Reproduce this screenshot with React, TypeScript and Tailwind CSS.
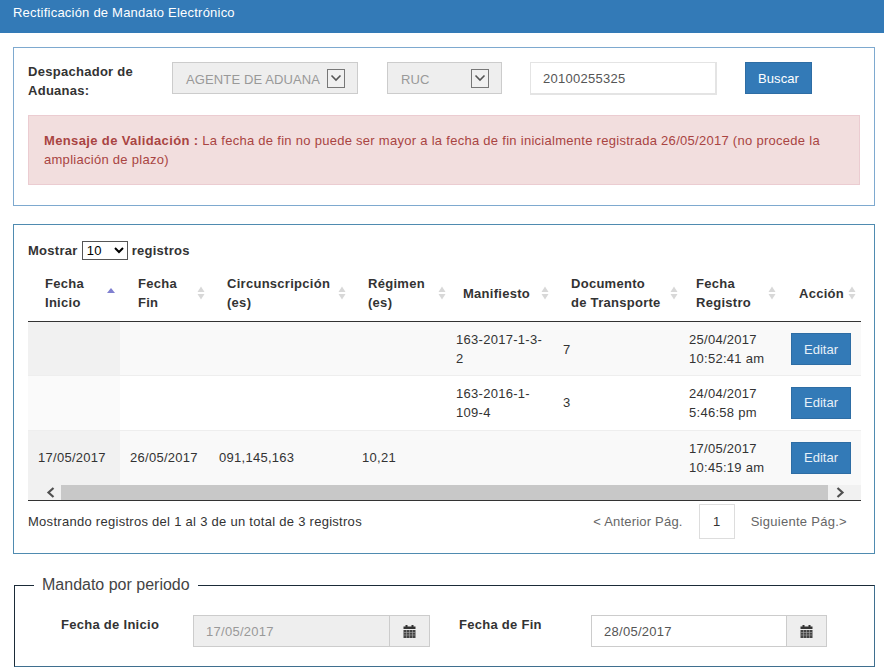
import React from "react";

function Sort({ active }: { active?: boolean }) {
  return (
    <svg width="8" height="14" viewBox="0 0 8 14" className="shrink-0">
      {active ? (
        <path d="M4 2 L8 7 H0 Z" fill="#8080d0" />
      ) : (
        <>
          <path d="M4 0.5 L7.5 6 H0.5 Z" fill="#d8d8d8" />
          <path d="M4 13.5 L7.5 8 H0.5 Z" fill="#d8d8d8" />
        </>
      )}
    </svg>
  );
}

function Calendar() {
  return (
    <svg width="13" height="13" viewBox="0 0 13 13">
      <rect x="2.5" y="0" width="2" height="2.5" fill="#333" />
      <rect x="8.5" y="0" width="2" height="2.5" fill="#333" />
      <rect x="0.5" y="1.5" width="12" height="2.5" fill="#333" />
      <rect x="0.5" y="5" width="12" height="8" fill="#444" />
      <path d="M0.5 7.5H12.5M0.5 10H12.5M3.5 5V13M6.5 5V13M9.5 5V13" stroke="#aaa" strokeWidth="0.6" />
    </svg>
  );
}

function FakeSelect({ text, w }: { text: string; w: string }) {
  return (
    <div className={`${w} h-8 bg-[#eeeeee] border border-[#cccccc] flex items-center justify-between pl-[13px] pr-3 shrink-0`}>
      <span className="text-[#999999] text-[13px] tracking-[0.12px] pt-[2px]">{text}</span>
      <span className="w-[18px] h-[19px] border border-[#777777] bg-[#f0f0f0] flex items-center justify-center">
        <svg width="12" height="8" viewBox="0 0 12 8">
          <path d="M1.5 1.5 L6 6 L10.5 1.5" fill="none" stroke="#555" strokeWidth="1.6" />
        </svg>
      </span>
    </div>
  );
}

type Head = { lines: string[]; pl: string; active?: boolean };

const heads: Head[] = [
  { lines: ["Fecha", "Inicio"], pl: "pl-[17px] pr-[5px]", active: true },
  { lines: ["Fecha", "Fin"], pl: "pl-[18px] pr-[4px]" },
  { lines: ["Circunscripción", "(es)"], pl: "pl-[18px] pr-[5px]" },
  { lines: ["Régimen", "(es)"], pl: "pl-[17px] pr-[1px]" },
  { lines: ["Manifiesto"], pl: "pl-[16px] pr-[4px]" },
  { lines: ["Documento", "de Transporte"], pl: "pl-[18px] pr-[1px]" },
  { lines: ["Fecha", "Registro"], pl: "pl-[17px] pr-[5px]" },
  { lines: ["Acción"], pl: "pl-[18px] pr-[5px]" },
];

const rows = [
  { stripe: true, a: "", b: "", c: "", d: "", m: ["163-2017-1-3-", "2"], doc: "7", r: ["25/04/2017", "10:52:41 am"] },
  { stripe: false, a: "", b: "", c: "", d: "", m: ["163-2016-1-", "109-4"], doc: "3", r: ["24/04/2017", "5:46:58 pm"] },
  { stripe: true, a: "17/05/2017", b: "26/05/2017", c: "091,145,163", d: "10,21", m: [], doc: "", r: ["17/05/2017", "10:45:19 am"] },
];

function Lines({ l }: { l: string[] }) {
  return (
    <>
      {l.map((t) => (
        <div key={t}>{t}</div>
      ))}
    </>
  );
}

function DateField({ value, disabled, w }: { value: string; disabled?: boolean; w: string }) {
  return (
    <div className="flex h-8">
      <div className={`${w} h-8 border border-[#cccccc] px-3 flex items-center text-[13px] ${disabled ? "bg-[#eeeeee] text-[#999999]" : "bg-white text-[#555555]"}`}>
        {value}
      </div>
      <div className="w-10 h-8 border border-l-0 border-[#cccccc] bg-[#eeeeee] flex items-center justify-center">
        <Calendar />
      </div>
    </div>
  );
}

export default function App() {
  return (
    <div className="w-[884px] h-[670px] overflow-hidden bg-white text-[#333333] text-[13px] leading-[19px] tracking-[0.28px]" style={{ fontFamily: '"Liberation Sans", Arial, sans-serif' }}>
      <div className="h-[33px] bg-[#337ab7] text-white pl-[13px] pt-[3px] tracking-[0.22px]">Rectificación de Mandato Electrónico</div>

      <div className="mt-[14px] mx-[13px] w-[862px] border border-[#7ea9cf] pt-[14px] px-[14px] pb-5">
        <div className="flex items-start h-[33px]">
          <div className="w-[144px] font-bold shrink-0">
            Despachador de
            <br />
            Aduanas:
          </div>
          <FakeSelect text="AGENTE DE ADUANA" w="w-[186px]" />
          <div className="ml-[29px]">
            <FakeSelect text="RUC" w="w-[115px]" />
          </div>
          <div className="ml-7 w-[187px] h-[33px] border-2 border-[#e4e4e4] border-t border-l pl-3 flex items-center text-[#555555] shrink-0">20100255325</div>
          <button className="ml-7 w-[67px] h-8 bg-[#337ab7] border border-[#2e6da4] text-white text-[13px] tracking-[0.1px]">Buscar</button>
        </div>
        <div className="mt-5 bg-[#f2dede] border border-[#ebccd1] text-[#a94442] p-[15px]">
          <b className="tracking-[0.37px]">Mensaje de Validación :</b> La fecha de fin no puede ser mayor a la fecha de fin inicialmente registrada 26/05/2017 (no procede la ampliación de plazo)
        </div>
      </div>

      <div className="mt-[18px] mx-[13px] w-[862px] h-[330px] border border-[#4f8bb0] pt-[16px] px-[14px]">
        <div className="flex items-center gap-1 font-bold h-[19px]">
          Mostrar
          <select className="appearance-auto w-[46px] h-[19px] border border-[#555555] bg-white font-normal text-[13px] text-black leading-none">
            <option>10</option>
          </select>
          registros
        </div>
        <table className="mt-[10px] w-[833px] table-fixed border-collapse">
          <colgroup>
            <col className="w-[92px]" />
            <col className="w-[89px]" />
            <col className="w-[142px]" />
            <col className="w-[96px]" />
            <col className="w-[106px]" />
            <col className="w-[126px]" />
            <col className="w-[102px]" />
            <col className="w-[80px]" />
          </colgroup>
          <thead>
            <tr className="h-[51px] border-b border-[#333333]">
              {heads.map((h) => (
                <th key={h.lines.join()} className={`${h.pl} pb-[4px] text-left font-bold text-[#333333] whitespace-nowrap`}>
                  <div className="flex items-center justify-between">
                    <div>
                      <Lines l={h.lines} />
                    </div>
                    <Sort active={h.active} />
                  </div>
                </th>
              ))}
            </tr>
          </thead>
          <tbody>
            {rows.map((r, i) => {
              const top = i === 0 ? "pt-[2px]" : "";
              return (
                <tr key={i} className={`${r.stripe ? "bg-[#f9f9f9]" : "bg-white"} ${i === 2 ? "h-[55px]" : "border-b border-[#eeeeee]"} ${i === 0 ? "h-[54px]" : ""} ${i === 1 ? "h-[55px]" : ""}`}>
                  <td className={`px-[10px] ${r.stripe ? "bg-[#f1f1f1]" : "bg-[#fafafa]"}`}>{r.a}</td>
                  <td className="px-[10px]">{r.b}</td>
                  <td className="px-[10px]">{r.c}</td>
                  <td className="px-[11px]">{r.d}</td>
                  <td className={`pl-[9px] pr-[10px] ${top}`}><Lines l={r.m} /></td>
                  <td className={`px-[10px] ${top}`}>{r.doc}</td>
                  <td className={`px-[10px] whitespace-nowrap ${top}`}><Lines l={r.r} /></td>
                  <td className={`pl-[10px] ${top}`}>
                    <button className="w-[60px] h-8 bg-[#337ab7] border border-[#2e6da4] text-[#e8f0f8] text-[13px] tracking-normal">Editar</button>
                  </td>
                </tr>
              );
            })}
          </tbody>
        </table>
        <div className="h-[15px] w-[833px] bg-[#f1f1f1] flex border-b border-[#333333] box-content">
          <div className="w-[33px] flex items-center justify-center pl-[12px]">
            <svg width="10" height="11" viewBox="0 0 10 11">
              <path d="M7.5 1 L2.5 5.5 L7.5 10" fill="none" stroke="#505050" strokeWidth="2.2" />
            </svg>
          </div>
          <div className="flex-1 bg-[#c8c8c8]" />
          <div className="w-[33px] flex items-center justify-center pr-[10px]">
            <svg width="10" height="11" viewBox="0 0 10 11">
              <path d="M2.5 1 L7.5 5.5 L2.5 10" fill="none" stroke="#505050" strokeWidth="2.2" />
            </svg>
          </div>
        </div>
        <div className="w-[833px] flex items-center justify-between h-[35px] mt-[3px]">
          <span>Mostrando registros del 1 al 3 de un total de 3 registros</span>
          <div className="flex items-center text-[#666666] pr-[14px]">
            <span className="tracking-[0.2px]">&lt; Anterior Pág.</span>
            <span className="w-9 h-[35px] border border-[#dddddd] mx-4 flex items-center justify-center text-[#333333]">1</span>
            <span>Siguiente Pág.&gt;</span>
          </div>
        </div>
      </div>

      <fieldset className="mt-[20px] ml-[14px] w-[861px] h-[93px] border border-[#1b2b38] border-r-[#3f6f8f] border-b-[#3f6f8f]">
        <legend className="ml-[19px] px-2 text-[16px] text-[#444444] leading-[22px] tracking-normal">Mandato por periodo</legend>
        <div className="flex pt-[19px]">
          <div className="w-[178px] pl-[46px] font-bold">Fecha de Inicio</div>
          <DateField value="17/05/2017" disabled w="w-[197px]" />
          <div className="w-[161px] pl-[29px] font-bold">Fecha de Fin</div>
          <DateField value="28/05/2017" w="w-[196px]" />
        </div>
      </fieldset>
    </div>
  );
}
